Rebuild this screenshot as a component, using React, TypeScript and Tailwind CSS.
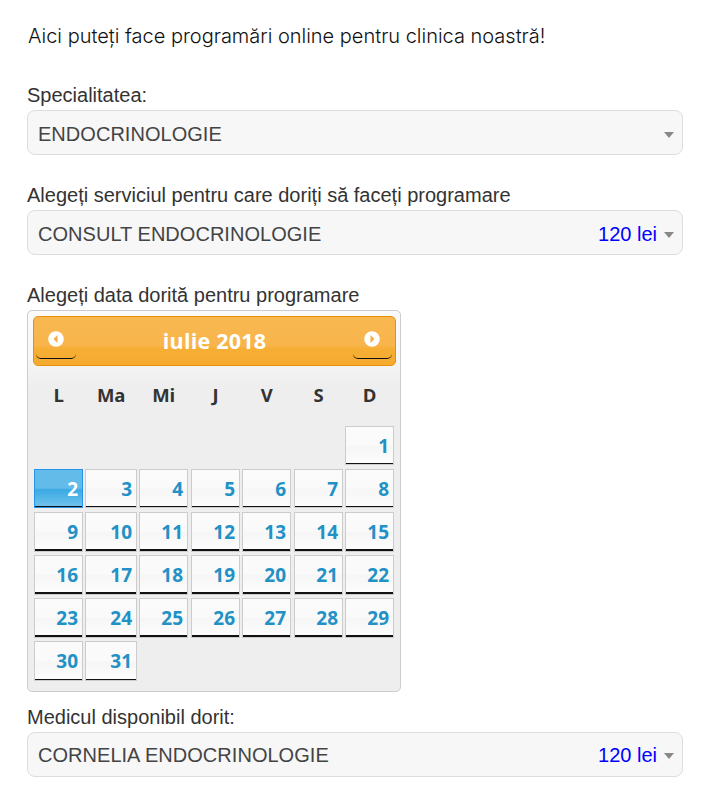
const weekdays = ["L", "Ma", "Mi", "J", "V", "S", "D"];

type Week = { days: (number | null)[]; height: string; line: string };

const thin = "border-b border-[#111]";
const thick = "border-b-2 border-[#111]";

const weeks: Week[] = [
  { days: [null, null, null, null, null, null, 1], height: "h-[39px] mb-1", line: thin },
  { days: [2, 3, 4, 5, 6, 7, 8], height: "h-[39px] mb-1", line: thin },
  { days: [9, 10, 11, 12, 13, 14, 15], height: "h-10 mb-[3px]", line: thick },
  { days: [16, 17, 18, 19, 20, 21, 22], height: "h-10 mb-[3px]", line: thick },
  { days: [23, 24, 25, 26, 27, 28, 29], height: "h-10 mb-[3px]", line: thick },
  { days: [30, 31, null, null, null, null, null], height: "h-10", line: thin },
];

const columns = ["w-[49px]", "ml-[2px] w-[52px]", "ml-[2px] w-[49px]", "ml-[3px] w-[49px]", "ml-[2px] w-[49px]", "ml-[3px] w-[49px]", "ml-[2px] w-[49px]"];

function Label({ children }: { children: string }) {
  return (
    <div className="h-[30px] text-[20px] leading-[30px] whitespace-nowrap text-[#333]">
      <span>{children}</span>
    </div>
  );
}

function SelectBox({ value, price, inset = "pt-[2px]" }: { value: string; price?: string; inset?: string }) {
  return (
    <div className={`flex h-[45px] w-[656px] items-center rounded-[8px] border border-[#ddd] bg-[#f7f7f7] pr-[8px] pl-[10px] text-[20px] whitespace-nowrap text-[#444] ${inset}`}>
      <span className="tracking-[0.03px]">{value}</span>
      {price && <span className="ml-auto text-[#00f]">{price}</span>}
      <svg className={price ? "mt-[2px] ml-[7px]" : "mt-[2px] ml-auto"} width="10" height="6" viewBox="0 0 10 6">
        <path d="M0 0h10L5 6z" fill="#888" />
      </svg>
    </div>
  );
}

function NavButton({ next = false }: { next?: boolean }) {
  return (
    <button
      className={`${next ? "mr-px w-[39px] pr-px" : "w-10"} flex h-10 items-center justify-center rounded-[5px] border-b border-[#111]`}
      aria-label={next ? "Luna următoare" : "Luna precedentă"}
    >
      <svg width="16" height="16" viewBox="0 0 16 16">
        <circle cx="8" cy="8" r="7.8" fill="#fff" />
        <path d={next ? "M6.5 4v8l4-4z" : "M9.5 4v8l-4-4z"} fill="#f6ae3e" />
      </svg>
    </button>
  );
}

function Calendar() {
  return (
    <div className="h-[382px] w-[374px] rounded-[5px] border border-[#ccc] bg-[#eee] bg-[linear-gradient(#fafafa_0px,#f7f7f7_45px,#eee_75px)] px-[5px] pt-[5px] font-['Open_Sans','Noto_Sans',sans-serif] font-bold">
      <div className="flex h-[50px] w-[363px] items-start justify-between rounded-[5px] border border-[#e78f08] bg-[linear-gradient(#f8b750_0%,#f8b54c_60%,#f6ae35_65%,#f6ab30_100%)] px-[2px] pt-[2px]">
        <NavButton />
        <div className="h-12 text-[21.5px] leading-[44px] tracking-[0.2px] text-white">iulie 2018</div>
        <NavButton next />
      </div>
      <div className="flex h-[60px] pl-px text-[18.5px] leading-[58px] text-[#333]">
        {weekdays.map((d, i) => (
          <div key={d} className={`${columns[i]} text-center tracking-[-0.3px]`}>{d}</div>
        ))}
      </div>
      <div className="pl-px">
        {weeks.map((week, r) => (
          <div key={r} className={`flex ${week.height}`}>
            {week.days.map((day, c) => (
              <div key={c} className={`${columns[c]} ${day === null ? "" : day === 2 ? "border border-[#2694e8]" : "border border-[#ccc]"}`}>
                {day !== null && (
                  <div
                    className={`h-full pr-1 text-right text-[19px] leading-[38px] font-bold ${week.line} ${
                      day === 2
                        ? "bg-[linear-gradient(#62bbe8_0%,#62bbe8_50%,#3baae3_55%,#6fc1ec_100%)] text-white"
                        : "bg-[linear-gradient(#fbfbfb_0%,#fafafa_50%,#f6f6f6_54%,#fcfcfc_100%)] text-[#2191c6]"
                    }`}
                  >
                    {day}
                  </div>
                )}
              </div>
            ))}
          </div>
        ))}
      </div>
    </div>
  );
}

export default function App() {
  return (
    <main className="min-h-[793px] w-[701px] bg-white pt-5 pl-[27px] font-['Liberation_Sans',Arial,sans-serif]">
      <p className="h-[60px] pl-px font-['Inter',sans-serif] text-[20px] leading-[32px] font-light tracking-[-0.01px] whitespace-nowrap text-[#111]">
        <span>Aici puteți face programări online pentru clinica noastră!</span>
      </p>
      <Label>Specialitatea:</Label>
      <SelectBox value="ENDOCRINOLOGIE" />
      <div className="mt-[25px]">
        <Label>Alegeți serviciul pentru care doriți să faceți programare</Label>
        <SelectBox value="CONSULT ENDOCRINOLOGIE" price="120 lei" />
      </div>
      <div className="mt-[25px]">
        <Label>Alegeți data dorită pentru programare</Label>
        <Calendar />
      </div>
      <div className="mt-[10px]">
        <Label>Medicul disponibil dorit:</Label>
        <SelectBox value="CORNELIA ENDOCRINOLOGIE" price="120 lei" inset="pt-0" />
      </div>
    </main>
  );
}
